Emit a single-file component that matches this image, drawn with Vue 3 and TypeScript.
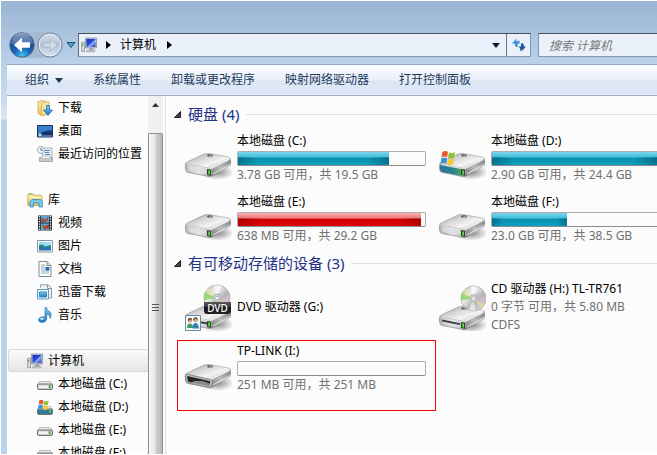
<script setup lang="ts">
import { ref } from 'vue'

interface SideEntry {
  label: string
  icon: string
  root?: boolean
  selected?: boolean
}

interface Device {
  name: string
  icon: string
  badge?: string
  used?: number
  full?: boolean
  lines?: string[]
  marked?: boolean
}

interface Group {
  title: string
  open: boolean
  devices: Device[]
}

const commands = ['系统属性', '卸载或更改程序', '映射网络驱动器', '打开控制面板']

const sections: SideEntry[][] = [
  [
    { label: '下载', icon: 'downloads' },
    { label: '桌面', icon: 'desktop' },
    { label: '最近访问的位置', icon: 'recent' },
  ],
  [
    { label: '库', icon: 'library', root: true },
    { label: '视频', icon: 'video' },
    { label: '图片', icon: 'picture' },
    { label: '文档', icon: 'document' },
    { label: '迅雷下载', icon: 'thunder' },
    { label: '音乐', icon: 'music' },
  ],
  [
    { label: '计算机', icon: 'computer', root: true, selected: true },
    { label: '本地磁盘 (C:)', icon: 'disk' },
    { label: '本地磁盘 (D:)', icon: 'disk-win' },
    { label: '本地磁盘 (E:)', icon: 'disk' },
    { label: '本地磁盘 (F:)', icon: 'disk' },
  ],
]

const groups = ref<Group[]>([
  {
    title: '硬盘 (4)',
    open: true,
    devices: [
      { name: '本地磁盘 (C:)', icon: 'drive', used: 81, lines: ['3.78 GB 可用，共 19.5 GB'] },
      { name: '本地磁盘 (D:)', icon: 'drive-win', used: 88, lines: ['2.90 GB 可用，共 24.4 GB'] },
      { name: '本地磁盘 (E:)', icon: 'drive', used: 98, full: true, lines: ['638 MB 可用，共 29.2 GB'] },
      { name: '本地磁盘 (F:)', icon: 'drive', used: 40, lines: ['23.0 GB 可用，共 38.5 GB'] },
    ],
  },
  {
    title: '有可移动存储的设备 (3)',
    open: true,
    devices: [
      { name: 'DVD 驱动器 (G:)', icon: 'dvd', badge: 'DVD' },
      { name: 'CD 驱动器 (H:) TL-TR761', icon: 'cd', lines: ['0 字节 可用，共 5.80 MB', 'CDFS'] },
      { name: 'TP-LINK (I:)', icon: 'removable', used: 0, lines: ['251 MB 可用，共 251 MB'], marked: true },
    ],
  },
])
</script>

<template>
  <svg class="sprite" aria-hidden="true">
    <defs>
      <linearGradient id="g-top" x1="0" y1="0" x2="1" y2="1">
        <stop offset="0" stop-color="#8e8e8e" />
        <stop offset=".35" stop-color="#d6d6d6" />
        <stop offset=".6" stop-color="#f4f4f4" />
        <stop offset="1" stop-color="#a4a4a4" />
      </linearGradient>
      <linearGradient id="g-front" x1="0" y1="0" x2="1" y2="0">
        <stop offset="0" stop-color="#b4b4b7" />
        <stop offset=".5" stop-color="#e4e4ea" />
        <stop offset="1" stop-color="#b0b0b3" />
      </linearGradient>
      <linearGradient id="g-side" x1="0" y1="1" x2="1" y2="0">
        <stop offset="0" stop-color="#6f6f6f" />
        <stop offset=".5" stop-color="#bdbdbd" />
        <stop offset="1" stop-color="#808080" />
      </linearGradient>
      <linearGradient id="g-teal" x1="0" y1="0" x2="1" y2="0">
        <stop offset="0" stop-color="#2b75a5" />
        <stop offset=".6" stop-color="#267f8b" />
        <stop offset="1" stop-color="#4fa36e" />
      </linearGradient>
      <linearGradient id="g-disc" x1="0" y1="0" x2="1" y2="1">
        <stop offset="0" stop-color="#b8b8b8" />
        <stop offset=".35" stop-color="#eee" />
        <stop offset=".6" stop-color="#b4b4b4" />
        <stop offset="1" stop-color="#e4e4e4" />
      </linearGradient>
      <linearGradient id="g-screen" x1="0" y1="0" x2="1" y2="1">
        <stop offset="0" stop-color="#1526b8" />
        <stop offset=".5" stop-color="#2c50dd" />
        <stop offset=".55" stop-color="#8eb4f8" />
        <stop offset="1" stop-color="#2639ba" />
      </linearGradient>
      <linearGradient id="g-folder" x1="0" y1="0" x2="0" y2="1">
        <stop offset="0" stop-color="#fbeeb0" />
        <stop offset="1" stop-color="#e5bf58" />
      </linearGradient>
      <linearGradient id="g-blue" x1="0" y1="0" x2="0" y2="1">
        <stop offset="0" stop-color="#82c9f4" />
        <stop offset="1" stop-color="#1b78c2" />
      </linearGradient>
      <radialGradient id="g-back" cx=".5" cy=".95" r=".85">
        <stop offset="0" stop-color="#43c6f2" />
        <stop offset=".4" stop-color="#1a65b8" />
        <stop offset="1" stop-color="#163b85" />
      </radialGradient>
      <linearGradient id="g-gloss" x1="0" y1="0" x2="0" y2="1">
        <stop offset="0" stop-color="#fff" stop-opacity=".8" />
        <stop offset="1" stop-color="#fff" stop-opacity=".2" />
      </linearGradient>
      <linearGradient id="g-fwd" x1="0" y1="0" x2="0" y2="1">
        <stop offset="0" stop-color="#d4deea" />
        <stop offset=".5" stop-color="#b3c4d8" />
        <stop offset="1" stop-color="#d3e4f3" />
      </linearGradient>
      <radialGradient id="g-shadow">
        <stop offset="0" stop-color="#333" stop-opacity=".6" />
        <stop offset="1" stop-color="#333" stop-opacity="0" />
      </radialGradient>
    </defs>

    <symbol id="flag" viewBox="0 0 16 16">
      <path d="M2 2C4 .5 6 .7 8 2L7 8C5 6.700 3 6.700 1 8Z" fill="#e8592a" />
      <path d="M9 2.400C11 3.800 13 3.500 15.500 2L14.500 8C12 9.500 10 9.300 8 8Z" fill="#8abf3a" />
      <path d="M.8 9C3 7.600 5 7.800 7 9L6 15C4 13.600 2 13.600 0 15Z" fill="#3d8ddd" />
      <path d="M8 9.200C10 10.500 12 10.400 14.300 9L13.300 15C11 16.400 9 16 7 14.800Z" fill="#f9c62e" />
    </symbol>

    <symbol id="drive" viewBox="0 0 48 48">
      <ellipse cx="33" cy="38" rx="17" ry="8" fill="url(#g-shadow)" />
      <path d="M27 34 46.500 24.500Q47.500 27 46.500 31.500L29 42Q27 43 26 42Z" fill="url(#g-side)" />
      <path d="M1.500 29.500Q2 28.500 4 27.500L19 20.500Q21.500 19 25 19.500L44.500 23Q47.500 24 46 26L29 34.500Q26.500 36 24 35.500L3 31Z" fill="url(#g-top)" stroke="#9a9a9a" stroke-width=".6" />
      <path d="M3 30Q14 32 26 34.800 28.500 35.500 28.200 38L27.800 41Q27.300 43 25 42.500L4 38.500Q2 38 1.800 36L1.300 31.500Q1.300 29.800 3 30Z" fill="url(#g-front)" stroke="#8b8b8b" stroke-width=".7" />
      <path d="M4 32 22 35.500V39.500L5 36.500Z" fill="#dedee6" opacity=".8" />
      <path d="M3 30.300 26 35 44 26" fill="none" stroke="#fff" stroke-width=".8" opacity=".8" />
      <path d="M29 40 46 30.500" stroke="#e9e9e9" stroke-width="1" />
      <ellipse cx="26" cy="21.500" rx="3" ry="1.300" fill="#565656" />
      <ellipse cx="26.500" cy="22" rx="1.800" ry=".7" fill="#b5b5b5" />
      <path d="M23 35 27 35.800V42L23 41Z" fill="#24491f" />
      <path d="M24.300 36.300 26 36.700V40.800L24.300 40.300Z" fill="#5ee04a" />
    </symbol>

    <symbol id="drive-win" viewBox="0 0 48 48">
      <use href="#drive" width="48" height="48" />
      <path d="M2 31 23 35V42L4 38Q2 37 2 35Z" fill="url(#g-teal)" />
      <use href="#flag" x="2" y="16" width="16" height="15" />
    </symbol>

    <symbol id="disc" viewBox="0 0 28 28">
      <circle cx="14" cy="14" r="13" fill="url(#g-disc)" stroke="#a5a5a5" stroke-width=".8" />
      <path d="M14 14 2 8.500A13 13 0 0 0 1.500 16Z" fill="#86d65a" opacity=".8" />
      <path d="M14 14 2.800 7A13 13 0 0 1 5.500 4.200Z" fill="#d5e987" opacity=".7" />
      <path d="M14 14 11 1.500H18Z" fill="#fff" opacity=".7" />
      <path d="M14 14 26.500 12 26 19Z" fill="#d9b7d7" opacity=".65" />
      <path d="M14 14 25 20 22 24Z" fill="#eddc90" opacity=".65" />
      <path d="M14 14 9 26 16 27Z" fill="#fff" opacity=".6" />
      <circle cx="14" cy="14" r="4" fill="#d0d2d6" stroke="#9fa0a4" stroke-width=".7" />
      <circle cx="14" cy="14" r="1.700" fill="#fff" stroke="#999" stroke-width=".6" />
    </symbol>

    <symbol id="cd" viewBox="0 0 48 48">
      <use href="#drive" y="4" width="48" height="48" />
      <path d="M4 36.500 22 40.200V42L4 38.500Z" fill="#383d47" />
      <use href="#disc" x="22" y="2" width="27" height="27" />
    </symbol>

    <symbol id="dvd" viewBox="0 0 48 48">
      <use href="#drive" y="3" width="48" height="48" />
      <path d="M15 38 23 39.500V41.500L15 40Z" fill="#383d47" />
      <use href="#disc" x="19" y="1" width="28" height="28" />
      <path d="M1.500 32.500H16.500V47.500H1.500Z" fill="#f5fbfc" stroke="#6a8b98" />
      <circle cx="6" cy="37" r="2.200" fill="#6b4c2c" />
      <circle cx="6.300" cy="38" r="1.400" fill="#e5b98a" />
      <path d="M3 45Q3 40.500 6 40.500T9 45Z" fill="#3e9a68" />
      <circle cx="11.500" cy="36.500" r="2.200" fill="#6b4c2c" />
      <circle cx="11.700" cy="37.500" r="1.400" fill="#e5b98a" />
      <path d="M8.500 45.500Q8.500 40 11.500 40T15 45.500Z" fill="#2f86b0" />
    </symbol>

    <symbol id="removable" viewBox="0 0 48 48">
      <use href="#drive" y="1" width="48" height="48" />
      <path d="M2.500 30 26 35.500Q28.700 36 28.300 39L27.800 42Q27.300 44 25 43.500L4 39Q2 38.500 1.800 36.500L1.300 32Q1.300 30 2.500 30Z" fill="#b9b9b9" stroke="#7c7c7c" stroke-width=".8" />
      <path d="M3 32 26 37.300V40Q16 35 7 38.500L4 37.500Z" fill="#242424" />
      <path d="M7 38.500Q16 35 26 40L25.500 42.300Z" fill="#8b8b8b" />
    </symbol>

    <symbol id="computer" viewBox="0 0 16 16">
      <path d="M.6 5.500 3.500 5V15L.6 14.300Z" fill="#d9dbd6" stroke="#888" stroke-width=".7" />
      <path d="M1.500 7V9" stroke="#4caf35" stroke-width="1.200" />
      <path d="M4.500 1H15.500V11H4.500Z" fill="#c3c9d6" stroke="#8a91a3" stroke-width=".8" />
      <path d="M5.500 2H14.500V10H5.500Z" fill="url(#g-screen)" />
      <path d="M8.500 11.300H12L13 13.500H7.500Z" fill="#9a9fa8" />
      <path d="M5.500 13.500H14V15H5.500Z" fill="#c8cbd0" stroke="#999" stroke-width=".5" />
    </symbol>

    <symbol id="downloads" viewBox="0 0 16 16">
      <path d="M1 1.500 5 .5 9 1.500V15L4 15.500 1 13.500Z" fill="url(#g-folder)" stroke="#cfa243" stroke-width=".7" />
      <path d="M4.500 2.500 12 1.500V13L4.500 15.500Z" fill="#f7e3a0" stroke="#d5ac50" stroke-width=".7" />
      <path d="M9.500 5.500H12.500V10H15.500L11 15.500 6.500 10H9.500Z" fill="url(#g-blue)" stroke="#1767ad" stroke-width=".7" />
    </symbol>

    <symbol id="desktop" viewBox="0 0 16 16">
      <path d="M.5 2.500H15.500V14H.5Z" fill="#1d4a91" stroke="#1e2f59" />
      <path d="M1 3H15V7Q8 7 1 11Z" fill="#3b80cf" />
      <path d="M1 11.500Q8 7 15 9V13.500H1Z" fill="#14366f" />
      <path d="M5 12.500H15V13.500H5Z" fill="#8ab4dd" />
      <path d="M1.500 10.500H4.500V13.500H1.500Z" fill="#b8e4f8" />
    </symbol>

    <symbol id="recent" viewBox="0 0 16 16">
      <path d="M5.500 2H15V11H5.500Z" fill="#e4eef7" stroke="#a5b3c0" />
      <path d="M8 4.500H13M8 6.500H12M8 8.500H13" stroke="#5788b5" />
      <path d="M2.500 11.500H15.500V15.500H2.500Z" fill="#c6cacd" stroke="#989da3" stroke-width=".8" />
      <path d="M5 10H13L14 12.500H4Z" fill="#e9ebee" stroke="#aaa" stroke-width=".5" />
      <circle cx="4" cy="4" r="3.500" fill="#f1f3f4" stroke="#a5abb0" />
      <path d="M4 2V4.300H6" fill="none" stroke="#555" stroke-width=".8" />
    </symbol>

    <symbol id="library" viewBox="0 0 16 16">
      <path d="M.8 3Q.8 2 2 2H5.500L6.500 3.200H14Q15 3.200 15 4.200V13.500H.8Z" fill="url(#g-folder)" stroke="#c99e42" stroke-width=".8" />
      <path d="M2 1.800H5.500" stroke="#84b455" stroke-width="1.200" />
      <path d="M1.500 5.500H14.500" stroke="#fff6cf" />
      <path d="M3 15V9.500L5 7.500H13.500L15.300 9.500V15H12V11H6.500V15Z" fill="#79c6ec" stroke="#3a8cc0" stroke-width=".8" />
    </symbol>

    <symbol id="video" viewBox="0 0 16 16">
      <path d="M1 .5H15V15.500H1Z" fill="#292d32" />
      <path d="M4 1H12V7.500H4Z" fill="#5aa9df" />
      <path d="M4 8.500H12V15H4Z" fill="#5aa9df" />
      <path d="M5 2 8 5 11 1.500V5L7 7.500H4Z M5 9.500 8 11 12 9V13L7 15Z" fill="#a54c35" />
      <path d="M2.500 1V15M13.500 1V15" stroke="#fff" stroke-width="1.300" stroke-dasharray="1.200 1.300" />
    </symbol>

    <symbol id="picture" viewBox="0 0 16 16">
      <path d="M.5 2.500H15.500V14H.5Z" fill="#fff" stroke="#8a98a3" />
      <path d="M2 4H14V12.500H2Z" fill="#9edbf0" />
      <path d="M2 7.500Q5 5 8 8.500L14 7V10H2Z" fill="#218783" />
      <path d="M2 10Q8 8.500 14 10V12.500H2Z" fill="#2a74b3" />
    </symbol>

    <symbol id="document" viewBox="0 0 16 16">
      <path d="M2 .5H10L14 4.500V15.500H2Z" fill="#fdfefe" stroke="#818b94" />
      <path d="M10 .5V4.500H14" fill="#d4dce4" stroke="#818b94" />
      <path d="M4 4H8M4 6H8M4 8H8M4 10H12M4 12H12" stroke="#8cadc6" />
      <path d="M8.500 6H12.500V9.500H8.500Z" fill="#2868af" />
    </symbol>

    <symbol id="thunder" viewBox="0 0 16 16">
      <path d="M3.500 3.500V.8H11L14.500 4V14H9" fill="#edf4f9" stroke="#8d9ba6" />
      <path d="M10.500 1V4.500H14" fill="none" stroke="#8d9ba6" />
      <path d="M.5 5.500H11.500V15H.5Z" fill="#eaf5fb" stroke="#6a9abb" />
      <path d="M2.500 8H9.500V13H2.500Z" fill="url(#g-blue)" stroke="#3989c1" />
    </symbol>

    <symbol id="music" viewBox="0 0 16 16">
      <path d="M8 .5H9.500Q10 3.500 12.500 4.500 15.500 6.500 13 11.500 13.300 7.500 9.700 7.200V12Q9 15.500 5 15.500 1.500 15.300 1.500 12.800 2 9.800 6 9.800H8Z" fill="url(#g-blue)" stroke="#206fac" stroke-width=".6" />
      <ellipse cx="5" cy="11.800" rx="2" ry="1" fill="#c5ecff" />
    </symbol>

    <symbol id="disk" viewBox="0 0 16 16">
      <path d="M2.500 5.500H13.500L15.500 8.500H.5Z" fill="#e8e8e8" stroke="#aaa" stroke-width=".7" />
      <path d="M.5 8.500Q.5 8 1.500 8H14.500Q15.500 8 15.500 9V12Q15.500 13.500 14 13.500H2Q.5 13.500 .5 12Z" fill="#c9cacc" stroke="#737577" />
      <path d="M2 9.500H11V12H2Z" fill="#f2f2f2" />
      <path d="M12.800 9.300V12.300" stroke="#39b52f" stroke-width="1.500" />
    </symbol>

    <symbol id="disk-win" viewBox="0 0 16 16">
      <use href="#disk" y="2" width="16" height="16" />
      <path d="M1 10.500H15V15H1Z" fill="#2f7d94" />
      <path d="M13 11V14" stroke="#69df59" stroke-width="1.400" />
      <use href="#flag" x="1" y="0" width="11" height="11" />
    </symbol>
  </svg>

  <div class="window">
    <header class="navbar">
      <div class="history">
        <button type="button" aria-label="后退">
          <svg class="orb" viewBox="0 0 26 26">
            <circle cx="13" cy="13" r="12.200" fill="url(#g-back)" stroke="#52698b" />
            <path d="M2 12A11 11 0 0 1 24 12Q13 15 2 12Z" fill="url(#g-gloss)" opacity=".65" />
            <path d="M5.500 13 12.500 6.500V10.800H20.500V15.200H12.500V19.500Z" fill="#fff" stroke="#fff" stroke-linejoin="round" />
          </svg>
        </button>
        <button type="button" aria-label="前进">
          <svg class="orb" viewBox="0 0 26 26">
            <circle cx="13" cy="13" r="12" fill="url(#g-fwd)" stroke="#73869d" />
            <circle cx="13" cy="13" r="10.800" fill="none" stroke="#e7eff7" />
            <path d="M20.500 13 13.500 7V11H6V15H13.500V19Z" fill="#d1dce8" stroke="#a0b3c7" stroke-width=".8" stroke-linejoin="round" />
          </svg>
        </button>
      </div>
      <button type="button" class="recent-pages" aria-label="最近的页面">
        <svg width="10" height="8" viewBox="0 0 10 8"><path d="M1 1.500H9L5 6.500Z" fill="#4fa5cb" stroke="#1c4d75" stroke-linejoin="round" /></svg>
      </button>
      <div class="address">
        <svg class="i16"><use href="#computer" /></svg>
        <svg class="arrow" viewBox="0 0 5 8"><path d="M0 0 5 4 0 8Z" /></svg>
        <a href="#computer">计算机</a>
        <svg class="arrow last" viewBox="0 0 5 8"><path d="M0 0 5 4 0 8Z" /></svg>
        <button type="button" class="drop" aria-label="以前的位置">
          <svg width="8" height="5" viewBox="0 0 8 5"><path d="M0 0H8L4 5Z" fill="#10183a" /></svg>
        </button>
        <button type="button" class="refresh" aria-label="刷新">
          <svg width="14" height="14" viewBox="0 0 14 14">
            <path d="M0 5.500 4.500 .5V3.500L7.500 2.500V5.500L5.500 6V9.500L3 8V5.500Z" fill="#3a92d6" />
            <path d="M14 8.500 9.500 13.500V10.500L8 13.500V10L6.500 8.500H9V5.500Q11.500 4.500 11.800 7V8.500Z" fill="#1a5496" />
          </svg>
        </button>
      </div>
      <input class="search" type="search" placeholder="搜索 计算机" aria-label="搜索 计算机" />
    </header>

    <div class="body">
      <nav class="toolbar">
        <button type="button">
          组织
          <svg class="caret" viewBox="0 0 8 5"><path d="M0 0H8L4 5Z" /></svg>
        </button>
        <button v-for="c in commands" :key="c" type="button">{{ c }}</button>
      </nav>

      <div class="panes">
        <aside class="sidebar">
          <ul v-for="(s, i) in sections" :key="i">
            <li v-for="e in s" :key="e.label">
              <a href="#" :class="{ root: e.root, selected: e.selected }">
                <svg class="i16"><use :href="'#' + e.icon" /></svg>
                <span>{{ e.label }}</span>
              </a>
            </li>
          </ul>
        </aside>
        <div class="scrollbar">
          <button type="button" aria-label="向上滚动">
            <svg width="7" height="4" viewBox="0 0 7 4"><path d="M0 4 3.500 0 7 4Z" fill="#333" /></svg>
          </button>
          <div class="thumb"><i></i><i></i><i></i></div>
        </div>

        <main class="content">
          <section v-for="g in groups" :key="g.title">
            <h2>
              <button type="button" :aria-expanded="g.open" @click="g.open = !g.open">
                <svg width="7" height="7" viewBox="0 0 7 7"><path d="M6.500 .5V6.500H.5Z" fill="#444" stroke="#222" /></svg>
                {{ g.title }}
              </button>
            </h2>
            <ul v-if="g.open" class="devices">
              <li v-for="d in g.devices" :key="d.name" :class="{ marked: d.marked }">
                <div class="picture">
                  <svg class="i48"><use :href="'#' + d.icon" /></svg>
                  <span v-if="d.badge" class="badge">{{ d.badge }}</span>
                </div>
                <div class="info">
                  <p class="name">{{ d.name }}</p>
                  <div v-if="d.used !== undefined" class="gauge" role="meter" :aria-label="d.name" :aria-valuenow="d.used">
                    <div v-if="d.used" class="fill" :class="{ full: d.full }" :style="{ width: d.used + '%' }"></div>
                  </div>
                  <p v-for="l in d.lines" :key="l">{{ l }}</p>
                </div>
              </li>
            </ul>
          </section>
        </main>
      </div>
    </div>
  </div>
</template>

<style>
body {
  background: #fff;
}
</style>

<style scoped>
* {
  box-sizing: border-box;
}
ul,
p,
h2 {
  margin: 0;
  padding: 0;
  list-style: none;
}
button {
  display: flex;
  align-items: center;
  padding: 0;
  border: 0;
  background: none;
  color: inherit;
  font: inherit;
}
a {
  color: inherit;
  text-decoration: none;
}
svg {
  display: block;
  flex: none;
}
.sprite {
  position: absolute;
  width: 0;
  height: 0;
}
.i16 {
  width: 16px;
  height: 16px;
}
.i48 {
  width: 48px;
  height: 48px;
}
.window {
  display: flex;
  flex-direction: column;
  height: 100vh;
  overflow: hidden;
  border: solid #fff;
  border-width: 1px 0 1px 1px;
  background: linear-gradient(#9ab5d3, #b9d1ea 62px, #c9dcf0 100px, #dce9f6 118px, #b9d1ea 119px);
  color: #000;
  font: 12px/18px 'Noto Sans', 'Noto Sans CJK SC', sans-serif;
}
.navbar {
  display: flex;
  align-items: center;
  flex: none;
  height: 63px;
  padding: 25px 0 0 8px;
}
.history {
  display: flex;
  gap: 2px;
  border-radius: 13px;
  background: #a5bad2;
}
.orb {
  width: 26px;
  height: 26px;
}
.recent-pages {
  margin: 0 2px 0 3px;
}
.address {
  display: flex;
  align-items: center;
  flex: 1;
  height: 24px;
  padding-left: 2px;
  border: 1px solid #8296ae;
  border-top-color: #454d5e;
  border-left-color: #5c687b;
  background: #ebf1fa;
}
.arrow {
  width: 5px;
  height: 8px;
  margin: 0 9px 0 9px;
}
.arrow.last {
  margin-left: 11px;
}
.drop {
  margin-left: auto;
  padding: 0 6px;
}
.refresh {
  justify-content: center;
  width: 24px;
  height: 100%;
  border-left: 1px solid #66758a;
}
.search {
  width: 119px;
  height: 24px;
  margin-left: 7px;
  padding: 0 10px;
  border: 1px solid #8296ae;
  border-top-color: #454d5e;
  border-right: 0;
  border-radius: 0;
  outline: 0;
  background: #ebf1fa;
  font: inherit;
  font-style: italic;
}
.search::placeholder {
  color: #777;
}
.body {
  display: flex;
  flex-direction: column;
  flex: 1;
  min-height: 0;
  margin-left: 6px;
}
.toolbar {
  display: flex;
  gap: 30px;
  flex: none;
  height: 32px;
  padding-left: 18px;
  border-top: 1px solid #96a9c0;
  border-bottom: 1px solid #a0afc3;
  background: linear-gradient(#fafcff, #eaf1fa 15px, #dce6f4 16px, #dde7f5);
  color: #1e395b;
}
.caret {
  width: 8px;
  height: 5px;
  margin-left: 6px;
  fill: #1e395b;
}
.panes {
  display: flex;
  flex: 1;
  min-height: 0;
  background: #fcfcfc;
}
.sidebar {
  flex: none;
  width: 141px;
  overflow: hidden;
}
.sidebar ul + ul {
  margin-top: 23px;
}
.sidebar a {
  display: flex;
  align-items: center;
  gap: 5px;
  height: 23px;
  padding-left: 30px;
  white-space: nowrap;
}
.sidebar a.root {
  padding-left: 20px;
}
.sidebar a.selected {
  margin-left: 1px;
  padding-left: 18px;
  border: 1px solid #d9d9d9;
  border-right: 0;
  border-radius: 3px 0 0 3px;
  background: linear-gradient(#fafafa, #e5e5e5);
}
.scrollbar {
  display: flex;
  flex-direction: column;
  flex: none;
  width: 15px;
  background: #f0f0f0;
}
.scrollbar button {
  justify-content: center;
  height: 17px;
}
.thumb {
  display: flex;
  flex: 1;
  flex-direction: column;
  align-items: center;
  justify-content: center;
  gap: 2px;
  margin-top: 20px;
  padding-top: 26px;
  border: 1px solid #8f8f8f;
  border-bottom: 0;
  border-radius: 2px 2px 0 0;
  background: linear-gradient(90deg, #f6f6f6, #e9e9eb 45%, #cfcfd3 55%, #b7b7bd);
}
.thumb i {
  width: 7px;
  height: 1px;
  background: #555;
}
.content {
  display: flex;
  flex: 1;
  flex-direction: column;
  gap: 2px;
  min-width: 0;
  margin-left: 2px;
  padding: 6px 0 0 8px;
  overflow: hidden;
  border-left: 1px solid #dbe5f2;
}
h2 {
  display: flex;
  align-items: center;
  gap: 7px;
  height: 24px;
  margin-bottom: 1px;
  color: #1e3287;
  font-size: 15px;
  font-weight: 400;
}
h2 button {
  gap: 7px;
}
h2::after {
  flex: 1;
  height: 1px;
  background: #dcdfe6;
  content: '';
}
.devices {
  display: grid;
  grid-template-columns: repeat(auto-fill, 242px);
  grid-auto-rows: 61px;
  column-gap: 12px;
  width: 520px;
  padding-left: 10px;
}
.devices li {
  display: flex;
  position: relative;
  align-items: center;
  gap: 5px;
  color: #707070;
}
.picture {
  position: relative;
}
.badge {
  position: absolute;
  top: 19px;
  right: 1px;
  width: 27px;
  border-radius: 0 0 3px 3px;
  background: linear-gradient(#5a5a5a, #333 45%, #161616 46%, #222);
  color: #fff;
  font-size: 10px;
  font-weight: 500;
  line-height: 12px;
  text-align: center;
}
.info {
  flex: 1;
  white-space: nowrap;
}
.info .name {
  color: #000;
}
.gauge {
  height: 15px;
  margin-top: 1px;
  border: 1px solid #adadad;
  border-bottom-color: #8b8b8b;
  border-radius: 2px;
  background: #fcfcfc;
}
.fill {
  height: 100%;
  background:
    linear-gradient(90deg, rgb(0 70 90 / 45%), transparent 14%, transparent 86%, rgb(0 70 90 / 45%)) 0 100% / 100% 60% no-repeat,
    linear-gradient(#7cd5ec, #3fbddb 40%, #0b8eae 48%, #0ba0bf);
}
.fill.full {
  background:
    linear-gradient(90deg, rgb(120 0 0 / 40%), transparent 14%, transparent 86%, rgb(120 0 0 / 40%)) 0 100% / 100% 60% no-repeat,
    linear-gradient(#f9b1b1, #ee7676 40%, #d00000 48%, #df0606);
}
.marked::after {
  position: absolute;
  inset: 3px -10px -13px -7px;
  border: 1px solid #f00;
  content: '';
}
</style>
